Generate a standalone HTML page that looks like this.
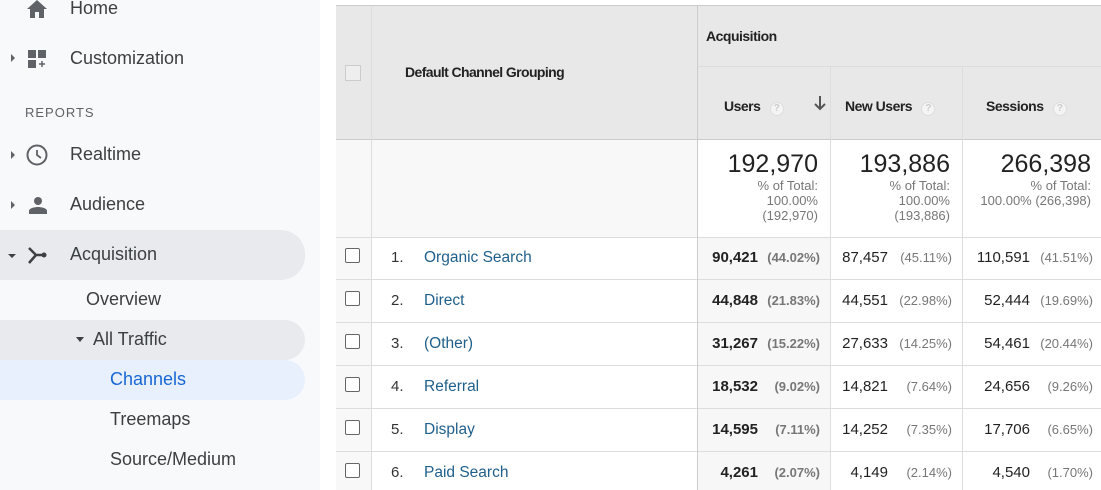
<!DOCTYPE html><html><head><style>
*{margin:0;padding:0;box-sizing:border-box}
body{width:1101px;height:490px;overflow:hidden;background:#fff;font-family:"Liberation Sans",sans-serif;position:relative}
.sb{position:absolute;left:0;top:0;width:320px;height:490px;background:#f8f9fa}
.it{position:absolute;font-size:18px;color:#3c4043}
.pill{position:absolute;left:0;width:305px;border-radius:0 24px 24px 0}
.tri{position:absolute;width:0;height:0}
.a{position:absolute}
.g{background:#e8e8e8}
.t{position:absolute;font-family:"Liberation Sans",sans-serif}
.hd{letter-spacing:-0.5px}
.hl{position:absolute;background:#ddd}
.num{position:absolute;font-size:14px;text-align:right}
.cb{position:absolute;left:345px;width:15px;height:15px;border:1px solid #666;border-radius:2px;background:#fff}
.q{display:inline-block;width:14px;height:14px;border-radius:7px;border:1px solid #ddd;background:#f4f4f4;color:#ccc;font-size:10px;text-align:center;line-height:12px;margin-left:6px;letter-spacing:0}
</style></head><body>
<div class="sb">
 <div class="pill" style="top:230px;height:50px;background:#e8eaed"></div>
 <div class="pill" style="top:320px;height:40px;background:#e8eaed"></div>
 <div class="pill" style="top:360px;height:40px;background:#e8f0fe"></div>
 <svg class="a" style="left:26px;top:0" width="22" height="18" viewBox="0 0 22 18"><path d="M11 0 L21 9 H18 V18 H13 V12 H9 V18 H4 V9 H1Z" fill="#5f6368"/></svg>
 <div class="it" style="left:70px;top:-2px">Home</div>
 <div class="tri" style="left:11px;top:54px;border-left:4px solid #5f6368;border-top:4px solid transparent;border-bottom:4px solid transparent"></div>
 <svg class="a" style="left:28px;top:50px" width="20" height="20"><rect x="0" y="0" width="8" height="8" fill="#5f6368"/><rect x="10" y="0" width="8" height="8" fill="#5f6368"/><rect x="0" y="10" width="8" height="8" fill="#5f6368"/><path d="M14 11v6M11 14h6" stroke="#5f6368" stroke-width="1.5"/></svg>
 <div class="it" style="left:70px;top:48px">Customization</div>
 <div class="t" style="left:25px;top:105px;font-size:13px;letter-spacing:1px;color:#5f6368">REPORTS</div>
 <div class="tri" style="left:11px;top:151px;border-left:4px solid #5f6368;border-top:4px solid transparent;border-bottom:4px solid transparent"></div>
 <svg class="a" style="left:26px;top:144px" width="22" height="22"><circle cx="11" cy="11" r="9.5" fill="none" stroke="#5f6368" stroke-width="2"/><path d="M11 6v5l4 3" fill="none" stroke="#5f6368" stroke-width="1.8"/></svg>
 <div class="it" style="left:70px;top:144px">Realtime</div>
 <div class="tri" style="left:11px;top:201px;border-left:4px solid #5f6368;border-top:4px solid transparent;border-bottom:4px solid transparent"></div>
 <svg class="a" style="left:28px;top:196px" width="20" height="20"><circle cx="10" cy="5" r="4" fill="#5f6368"/><path d="M1 18v-3c0-3 6-4 9-4s9 1 9 4v3z" fill="#5f6368"/></svg>
 <div class="it" style="left:70px;top:194px">Audience</div>
 <div class="tri" style="left:8px;top:254px;border-top:4px solid #3c4043;border-left:4px solid transparent;border-right:4px solid transparent"></div>
 <svg class="a" style="left:26px;top:246px" width="22" height="20"><path d="M3 2 L10 9 L3 17 M10 9 H16" fill="none" stroke="#3c4043" stroke-width="2.5"/><circle cx="18" cy="9" r="2.5" fill="#3c4043"/></svg>
 <div class="it" style="left:70px;top:244px">Acquisition</div>
 <div class="it" style="left:86px;top:289px">Overview</div>
 <div class="tri" style="left:76px;top:337px;border-top:5px solid #3c4043;border-left:4px solid transparent;border-right:4px solid transparent"></div>
 <div class="it" style="left:93px;top:329px">All Traffic</div>
 <div class="it" style="left:110px;top:369px;color:#1967d2">Channels</div>
 <div class="it" style="left:110px;top:409px">Treemaps</div>
 <div class="it" style="left:110px;top:449px">Source/Medium</div>
</div>

<div class="a g" style="left:336px;top:6px;width:765px;height:133px"></div>
<div class="a" style="left:336px;top:139px;width:36px;height:351px;background:#f8f8f8"></div>
<div class="a" style="left:372px;top:139px;width:325px;height:98px;background:#f8f8f8"></div>
<div class="a" style="left:697px;top:237px;width:133px;height:253px;background:#f7f7f7"></div>
<div class="hl" style="left:336px;top:5px;width:765px;height:1px;background:#ccc"></div>
<div class="hl" style="left:697px;top:66px;width:404px;height:1px"></div>
<div class="hl" style="left:336px;top:139px;width:765px;height:1px;background:#ccc"></div>
<div class="hl" style="left:336px;top:237px;width:765px;height:1px"></div>
<div class="hl" style="left:336px;top:279px;width:765px;height:1px"></div>
<div class="hl" style="left:336px;top:322px;width:765px;height:1px"></div>
<div class="hl" style="left:336px;top:365px;width:765px;height:1px"></div>
<div class="hl" style="left:336px;top:408px;width:765px;height:1px"></div>
<div class="hl" style="left:336px;top:451px;width:765px;height:1px"></div>
<div class="hl" style="left:371px;top:6px;width:1px;height:484px"></div>
<div class="hl" style="left:697px;top:6px;width:1px;height:484px;background:#ccc"></div>
<div class="hl" style="left:830px;top:66px;width:1px;height:424px"></div>
<div class="hl" style="left:962px;top:66px;width:1px;height:424px"></div>
<div class="a" style="left:345px;top:65px;width:16px;height:16px;border:1px solid #ccc;background:#eee"></div>
<div class="t hd" style="left:405px;top:64px;font-size:14px;font-weight:bold;color:#222;letter-spacing:-0.6px">Default Channel Grouping</div>
<div class="t hd" style="left:706px;top:28px;font-size:14px;font-weight:bold;color:#222">Acquisition</div>
<div class="t hd" style="left:724px;top:98px;font-size:14px;font-weight:bold;color:#222">Users <span class="q">?</span></div>
<svg class="a" style="left:814px;top:95px" width="12" height="16"><path d="M6 1v13M1 9l5 5 5-5" fill="none" stroke="#555" stroke-width="2"/></svg>
<div class="t hd" style="left:845px;top:98px;font-size:14px;font-weight:bold;color:#222">New Users <span class="q">?</span></div>
<div class="t hd" style="left:986px;top:98px;font-size:14px;font-weight:bold;color:#222">Sessions <span class="q">?</span></div>

<div class="num" style="right:283px;top:150px;font-size:25px;color:#222">192,970</div>
<div class="num" style="right:283px;top:178px;font-size:13px;color:#777;line-height:15px">% of Total:<br>100.00%<br>(192,970)</div>
<div class="num" style="right:151px;top:150px;font-size:25px;color:#222">193,886</div>
<div class="num" style="right:151px;top:178px;font-size:13px;color:#777;line-height:15px">% of Total:<br>100.00%<br>(193,886)</div>
<div class="num" style="right:10px;top:150px;font-size:25px;color:#222">266,398</div>
<div class="num" style="right:10px;top:178px;font-size:13px;color:#777;line-height:15px">% of Total:<br>100.00% (266,398)</div>

<div id="rows"></div>
<script>
var d=[["Organic Search","90,421","44.02%","87,457","45.11%","110,591","41.51%"],["Direct","44,848","21.83%","44,551","22.98%","52,444","19.69%"],["(Other)","31,267","15.22%","27,633","14.25%","54,461","20.44%"],["Referral","18,532","9.02%","14,821","7.64%","24,656","9.26%"],["Display","14,595","7.11%","14,252","7.35%","17,706","6.65%"],["Paid Search","4,261","2.07%","4,149","2.14%","4,540","1.70%"]];
var h="";d.forEach(function(r,i){var y=237+i*43;
h+='<div class="cb" style="top:'+(y+11)+'px"></div>';
h+='<div class="t" style="left:391px;top:'+(y+12)+'px;font-size:15px;color:#333">'+(i+1)+'.</div>';
h+='<div class="t" style="left:424px;top:'+(y+12)+'px;font-size:15.5px;color:#1f5f8b">'+r[0]+'</div>';
h+='<div class="t" style="left:704px;width:54px;text-align:right;top:'+(y+12)+'px;font-size:15px;font-weight:bold;color:#222">'+r[1]+'</div>';
h+='<div class="t" style="right:281px;top:'+(y+13)+'px;font-size:13px;font-weight:bold;color:#777">('+r[2]+')</div>';
h+='<div class="t" style="left:836px;width:52px;text-align:right;top:'+(y+12)+'px;font-size:15px;color:#222">'+r[3]+'</div>';
h+='<div class="t" style="right:149px;top:'+(y+13)+'px;font-size:13px;color:#777">('+r[4]+')</div>';
h+='<div class="t" style="left:968px;width:62px;text-align:right;top:'+(y+12)+'px;font-size:15px;color:#222">'+r[5]+'</div>';
h+='<div class="t" style="right:8px;top:'+(y+13)+'px;font-size:13px;color:#777">('+r[6]+')</div>';
});document.getElementById("rows").innerHTML=h;
</script>
</body></html>
